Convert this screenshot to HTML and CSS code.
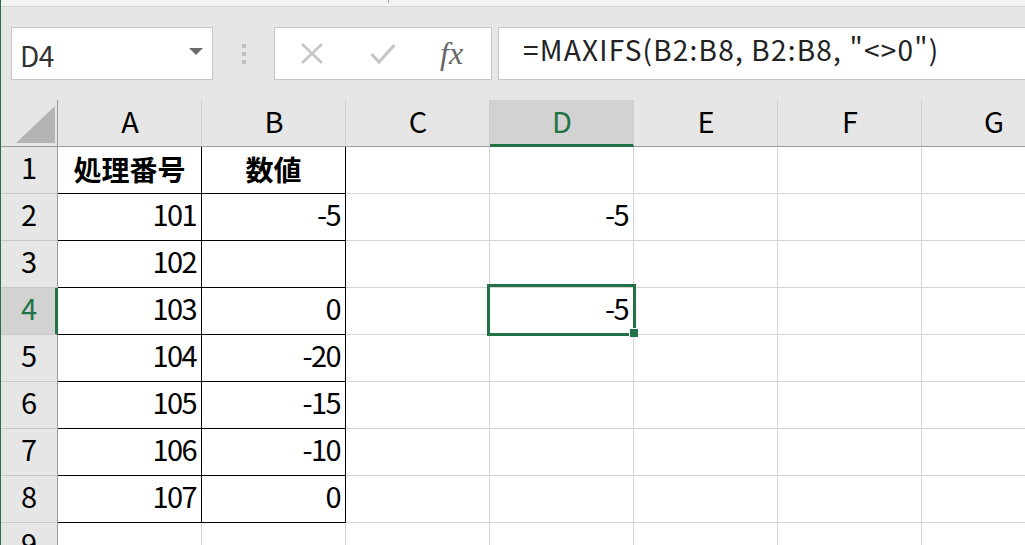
FILE: index.html
```html
<!DOCTYPE html>
<html lang="ja">
<head>
    <meta charset="UTF-8">
    <title>MAXIFS - Excel</title>
    <link rel="stylesheet" href="styles.css">
</head>
<body>
    <div class="app">
        <div class="top-strip"><span class="tick"></span></div>

        <!-- barre de formule -->
        <div class="toolbar">
            <div class="namebox">
                <span class="namebox-text">D4</span>
                <svg class="namebox-arrow" width="14" height="7" viewBox="0 0 14 7"><polygon points="0,0 14,0 7,7" fill="#6b6b6b"/></svg>
            </div>
            <div class="grip"><i></i><i></i><i></i></div>
            <div class="fbtns">
                <svg class="fbtn" width="24" height="21" viewBox="0 0 24 21"><path d="M2 1 L22 20 M22 1 L2 20" stroke="#c6c6c6" stroke-width="2.6" fill="none"/></svg>
                <svg class="fbtn" width="26" height="22" viewBox="0 0 26 22"><path d="M1.5 11 L9 19 L24.5 2" stroke="#c6c6c6" stroke-width="3.2" fill="none"/></svg>
                <span class="fx">fx</span>
            </div>
            <div class="formula">=MAXIFS(B2:B8, B2:B8, "&lt;&gt;0")</div>
        </div>

        <!-- feuille -->
        <div class="sheet">
            <div class="cell corner"><span class="corner-tri"></span></div>
            <div class="cell colhead">A</div>
            <div class="cell colhead">B</div>
            <div class="cell colhead">C</div>
            <div class="cell colhead active">D</div>
            <div class="cell colhead">E</div>
            <div class="cell colhead">F</div>
            <div class="cell colhead">G</div>

            <div class="cell rowhead">1</div>
            <div class="cell tb title">処理番号</div>
            <div class="cell tb title">数値</div>
            <div class="cell"></div><div class="cell"></div><div class="cell"></div><div class="cell"></div><div class="cell"></div>

            <div class="cell rowhead">2</div>
            <div class="cell tb num">101</div>
            <div class="cell tb num">-5</div>
            <div class="cell"></div>
            <div class="cell num">-5</div>
            <div class="cell"></div><div class="cell"></div><div class="cell"></div>

            <div class="cell rowhead">3</div>
            <div class="cell tb num">102</div>
            <div class="cell tb num"></div>
            <div class="cell"></div><div class="cell"></div><div class="cell"></div><div class="cell"></div><div class="cell"></div>

            <div class="cell rowhead active">4</div>
            <div class="cell tb num">103</div>
            <div class="cell tb num">0</div>
            <div class="cell"></div>
            <div class="cell num selected">-5<span class="selection"><span class="fill-handle"></span></span></div>
            <div class="cell"></div><div class="cell"></div><div class="cell"></div>

            <div class="cell rowhead">5</div>
            <div class="cell tb num">104</div>
            <div class="cell tb num">-20</div>
            <div class="cell"></div><div class="cell"></div><div class="cell"></div><div class="cell"></div><div class="cell"></div>

            <div class="cell rowhead">6</div>
            <div class="cell tb num">105</div>
            <div class="cell tb num">-15</div>
            <div class="cell"></div><div class="cell"></div><div class="cell"></div><div class="cell"></div><div class="cell"></div>

            <div class="cell rowhead">7</div>
            <div class="cell tb num">106</div>
            <div class="cell tb num">-10</div>
            <div class="cell"></div><div class="cell"></div><div class="cell"></div><div class="cell"></div><div class="cell"></div>

            <div class="cell rowhead">8</div>
            <div class="cell tb num">107</div>
            <div class="cell tb num">0</div>
            <div class="cell"></div><div class="cell"></div><div class="cell"></div><div class="cell"></div><div class="cell"></div>

            <div class="cell rowhead">9</div>
            <div class="cell"></div><div class="cell"></div><div class="cell"></div><div class="cell"></div><div class="cell"></div><div class="cell"></div><div class="cell"></div>
        </div>
    </div>
</body>
</html>
```

FILE: styles.css
```css
* {
    margin: 0;
    padding: 0;
    box-sizing: border-box;
}

body {
    width: 1025px;
    height: 545px;
    overflow: hidden;
    background: #e6e6e6;
    font-family: "Noto Sans CJK JP", "Noto Sans", sans-serif;
    color: #000000;
}

.app {
    height: 545px;
    border-left: 1px solid #217346;
    overflow: hidden;
}

.top-strip {
    height: 7px;
    background: #f3f3f3;
    border-bottom: 1px solid #d5d5d5;
    display: flex;
}

.tick {
    margin-left: 387px;
    width: 1px;
    height: 3px;
    background: #a8a8a8;
}

.toolbar {
    height: 93px;
    display: flex;
    align-items: flex-start;
    padding-top: 20px;
    padding-left: 10px;
}

.namebox {
    width: 202px;
    height: 53px;
    background: #ffffff;
    border: 1px solid #c6c6c6;
    display: flex;
    align-items: center;
    justify-content: space-between;
    padding: 0 9px 0 8px;
}

.namebox-text {
    font-size: 28px;
    color: #333333;
    letter-spacing: -0.5px;
    line-height: 1;
    padding-top: 2px;
}

.namebox-arrow {
    margin-top: -4px;
}

.grip {
    width: 61px;
    height: 53px;
    display: flex;
    flex-direction: column;
    align-items: center;
    justify-content: center;
    gap: 4px;
}

.grip i {
    width: 4px;
    height: 4px;
    background: #c3c3c3;
}

.fbtns {
    width: 218px;
    height: 53px;
    background: #ffffff;
    border: 1px solid #c6c6c6;
    display: flex;
    align-items: center;
    padding-left: 25px;
    gap: 46px;
}

.fx {
    font-family: "Liberation Serif", "DejaVu Serif", serif;
    font-style: italic;
    font-size: 32px;
    color: #666666;
    line-height: 1;
    margin-left: -2px;
    padding-bottom: 2px;
}

.formula {
    flex: 1;
    margin-left: 6px;
    height: 53px;
    background: #ffffff;
    border-top: 1px solid #c6c6c6;
    border-bottom: 1px solid #c6c6c6;
    border-left: 1px solid #c6c6c6;
    font-size: 28px;
    letter-spacing: 1.2px;
    color: #222222;
    line-height: 43px;
    padding-left: 24px;
    white-space: nowrap;
}

/* grille */
.sheet {
    display: grid;
    grid-template-columns: 57px repeat(7, 144px);
    grid-auto-rows: 47px;
    background: #ffffff;
}

.cell {
    border-right: 1px solid #d4d4d4;
    border-bottom: 1px solid #d4d4d4;
    display: flex;
    align-items: center;
    font-size: 29px;
    line-height: 1;
    white-space: nowrap;
}

.corner,
.colhead,
.rowhead {
    background: #e6e6e6;
}

.corner {
    border-right: 1px solid #9b9b9b;
    border-bottom: 1px solid #9b9b9b;
    align-items: flex-end;
    justify-content: flex-end;
    padding: 0 2px 3px 0;
}

.corner-tri {
    width: 39px;
    height: 37px;
    background: #b4b4b4;
    clip-path: polygon(100% 0, 100% 100%, 0 100%);
}

.colhead {
    justify-content: center;
    border-right-color: #cdcdcd;
    border-bottom: 1px solid #9b9b9b;
    letter-spacing: -1px;
    padding-bottom: 6px;
}

.colhead.active {
    background: #d2d2d2;
    color: #217346;
    border-bottom: 3px solid #217346;
    padding-bottom: 4px;
}

.rowhead {
    justify-content: center;
    border-right: 1px solid #9b9b9b;
    border-bottom-color: #c8c8c8;
    padding-bottom: 7px;
}

.rowhead.active {
    background: #d2d2d2;
    color: #217346;
    border-right: 3px solid #217346;
    padding-left: 2px;
}

.tb {
    border-right-color: #000000;
    border-bottom-color: #000000;
}

.title {
    justify-content: center;
    font-size: 28px;
    font-weight: bold;
    padding-bottom: 3px;
}

.num {
    justify-content: flex-end;
    padding: 0 5px 7px 0;
    letter-spacing: -1.6px;
}

.selected {
    position: relative;
}

.selection {
    position: absolute;
    top: -4px;
    left: -3px;
    right: -3px;
    bottom: -2px;
    border: 3px solid #217346;
}

.fill-handle {
    position: absolute;
    right: -5px;
    bottom: -4px;
    width: 9px;
    height: 9px;
    background: #217346;
    border-left: 1px solid #ffffff;
    border-top: 1px solid #ffffff;
}
```
